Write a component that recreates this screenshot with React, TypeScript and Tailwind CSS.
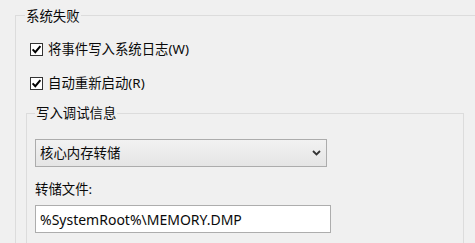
import React from "react";

const font = { fontFamily: '"Segoe UI", "Noto Sans", "Noto Sans CJK SC", sans-serif' };

function Check() {
  return (
    <div className="w-[13px] h-[13px] border border-[#333333] bg-white flex items-center justify-center shrink-0">
      <svg width="11" height="11" viewBox="0 0 11 11">
        <path d="M1.6 5.4 L4.3 8.2 L9.4 2.2" fill="none" stroke="#000" strokeWidth="2" />
      </svg>
    </div>
  );
}

export default function App() {
  return (
    <div
      className="w-[475px] h-[243px] bg-[#f0f0f0] overflow-hidden pt-[15px] pl-[15px] text-[13.4px] text-[#0a0a0a]"
      style={font}
    >
      <div className="w-[480px] h-[260px] border-t border-l border-[#dcdcdc] flex flex-col">
        <div className="-mt-[9px] ml-[9px] h-[18px] leading-[18px] px-[1px] bg-[#f0f0f0] w-fit">系统失败</div>
        <div className="flex flex-col gap-[21px] mt-[18px] pl-[14px]">
          <div className="flex items-center gap-[5px] h-[13px]">
            <Check />
            <span>将事件写入系统日志(W)</span>
          </div>
          <div className="flex items-center gap-[5px] h-[13px]">
            <Check />
            <span>自动重新启动(R)</span>
          </div>
        </div>
        <div className="ml-[10px] mt-[23px] w-[438px] h-[200px] border border-[#dcdcdc] flex flex-col">
          <div className="-mt-[10px] ml-[8px] h-[18px] leading-[18px] px-[1px] bg-[#f0f0f0] w-fit">写入调试信息</div>
          <div className="pl-[8px] mt-[17px] flex flex-col">
            <div className="w-[292px] h-[28px] border border-[#acacac] bg-gradient-to-b from-[#f2f2f2] to-[#e5e5e5] flex items-center justify-between pl-[4px] pr-[5px]">
              <span>核心内存转储</span>
              <svg width="9" height="6" viewBox="0 0 9 6">
                <path d="M1 1 L4.5 4.5 L8 1" fill="none" stroke="#333" strokeWidth="1.8" />
              </svg>
            </div>
            <div className="mt-[14px] h-[16px] leading-[16px]">转储文件:</div>
            <div className="mt-[8px] w-[296px] h-[28px] border border-[#adadad] bg-white flex items-center pl-[4px] text-[14px]">
              %SystemRoot%\MEMORY.DMP
            </div>
          </div>
        </div>
      </div>
    </div>
  );
}
